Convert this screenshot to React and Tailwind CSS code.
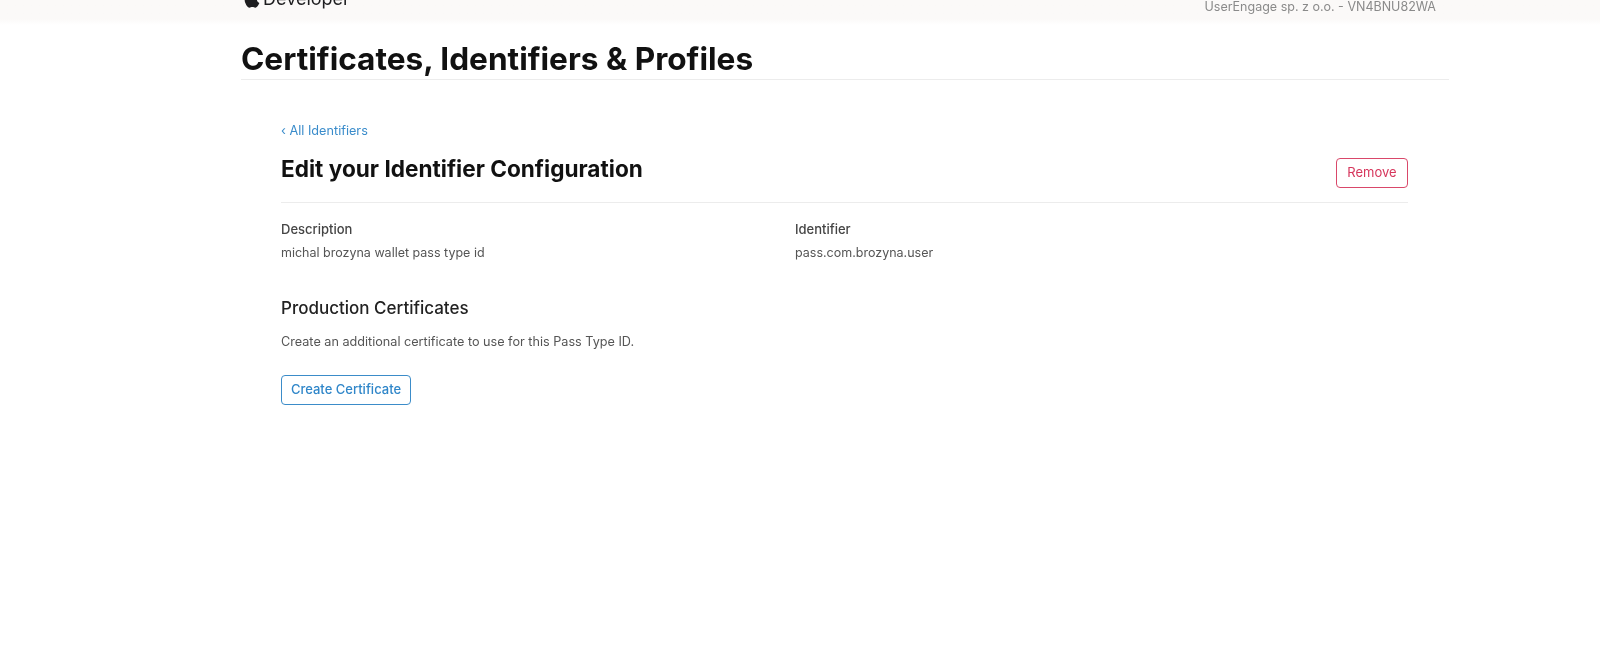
import React from "react";
import { FaApple } from "react-icons/fa";

function Field({ label, value, className }) {
  return (
    <div className={className}>
      <div className="text-[13px] leading-[16px] font-medium text-[#444]">{label}</div>
      <div className="mt-[8px] text-[12.5px] leading-[16px] text-[#555]">{value}</div>
    </div>
  );
}

export default function App() {
  return (
    <div className="min-h-[662px] bg-white font-['Inter',sans-serif] overflow-hidden blur-[0.4px]">
      <header className="h-[25px] overflow-hidden bg-gradient-to-b from-[#fbf9f8] from-75% to-white">
        <div className="ml-[242px] mr-[164px] -mt-[13px] flex items-start justify-between">
          <div className="flex items-center gap-[1px] text-[#1d1d1f]">
            <FaApple className="w-[20px] h-[20px]" />
            <span className="text-[18px] leading-[24px]">Developer</span>
          </div>
          <div className="mt-[12px] text-[12.5px] leading-[16px] text-[#8a8a8a]">UserEngage sp. z o.o. - VN4BNU82WA</div>
        </div>
      </header>

      <main className="ml-[241px] w-[1208px]">
        <h1 className="mt-[14px] pb-[2px] h-[41px] text-[31.6px] leading-[40px] font-bold text-[#111] border-b border-[#ececec]">
          Certificates, Identifiers &amp; Profiles
        </h1>

        <section className="ml-[40px] mr-[41px] mt-[43px]">
          <a className="block text-[12.7px] leading-[16px] text-[#3a8ccb]">‹ All Identifiers</a>

          <div className="mt-[15px] h-[49px] flex items-start justify-between border-b border-[#ececec]">
            <h2 className="text-[22.6px] leading-[30px] font-bold text-[#111]">Edit your Identifier Configuration</h2>
            <button className="mt-[4px] w-[72px] h-[30px] rounded-[4px] border border-[#d9486a] text-[13px] text-[#d6365c] bg-white">Remove</button>
          </div>

          <div className="mt-[18px] flex">
            <Field className="w-[514px]" label="Description" value="michal brozyna wallet pass type id" />
            <Field label="Identifier" value="pass.com.brozyna.user" />
          </div>

          <h3 className="mt-[35px] text-[17px] leading-[24px] font-medium text-[#222]">Production Certificates</h3>
          <p className="mt-[14px] text-[12.65px] leading-[16px] text-[#555]">Create an additional certificate to use for this Pass Type ID.</p>
          <button className="mt-[25px] w-[130px] h-[30px] rounded-[4px] border border-[#3b8cc9] text-[13px] font-medium text-[#2f86c9] bg-white">Create Certificate</button>
        </section>
      </main>
    </div>
  );
}
